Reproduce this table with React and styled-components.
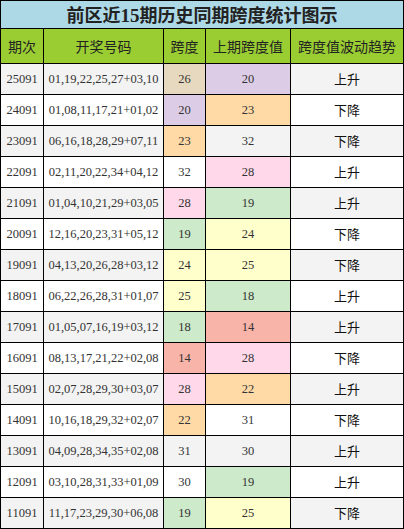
import React from 'react';
import styled, { createGlobalStyle } from 'styled-components';

const Global = createGlobalStyle`
    html, body{
        margin: 0;
        padding: 0;
        background: #FFF;
    }
`;

const colors = {
    tan: '#E7D9BF',
    lav: '#DDCCE6',
    peach: '#FFDAA7',
    pink: '#FFD9E9',
    green: '#CDEACA',
    yellow: '#FFFFCC',
    salmon: '#F9B4AA',
};

const rows = [
    ['25091', '01,19,22,25,27+03,10', '26', 'tan', '20', 'lav', '上升'],
    ['24091', '01,08,11,17,21+01,02', '20', 'lav', '23', 'peach', '下降'],
    ['23091', '06,16,18,28,29+07,11', '23', 'peach', '32', null, '下降'],
    ['22091', '02,11,20,22,34+04,12', '32', null, '28', 'pink', '上升'],
    ['21091', '01,04,10,21,29+03,05', '28', 'pink', '19', 'green', '上升'],
    ['20091', '12,16,20,23,31+05,12', '19', 'green', '24', 'yellow', '下降'],
    ['19091', '04,13,20,26,28+03,12', '24', 'yellow', '25', 'yellow', '下降'],
    ['18091', '06,22,26,28,31+01,07', '25', 'yellow', '18', 'green', '上升'],
    ['17091', '01,05,07,16,19+03,12', '18', 'green', '14', 'salmon', '上升'],
    ['16091', '08,13,17,21,22+02,08', '14', 'salmon', '28', 'pink', '下降'],
    ['15091', '02,07,28,29,30+03,07', '28', 'pink', '22', 'peach', '上升'],
    ['14091', '10,16,18,29,32+02,07', '22', 'peach', '31', null, '下降'],
    ['13091', '04,09,28,34,35+02,08', '31', null, '30', null, '上升'],
    ['12091', '03,10,28,31,33+01,09', '30', null, '19', 'green', '上升'],
    ['11091', '11,17,23,29,30+06,08', '19', 'green', '25', 'yellow', '下降'],
];

export default function App(){
    return (
        <>
            <Global />
            <Table>
                <colgroup>
                    <col style={{width: '43px'}} />
                    <col style={{width: '120px'}} />
                    <col style={{width: '42px'}} />
                    <col style={{width: '85px'}} />
                    <col />
                </colgroup>
                <tbody>
                    <tr>
                        <Title colSpan={5}>前区近<b className="num">15</b>期历史同期跨度统计图示</Title>
                    </tr>
                    <tr>
                        <Head>期次</Head>
                        <Head>开奖号码</Head>
                        <Head>跨度</Head>
                        <Head>上期跨度值</Head>
                        <Head>跨度值波动趋势</Head>
                    </tr>
                    {rows.map((r, i) =>
                        <Row key={r[0]} $odd={i % 2 === 0}>
                            <Num>{r[0]}</Num>
                            <Num>{r[1]}</Num>
                            <Num $bg={colors[r[3]]}>{r[2]}</Num>
                            <Num $bg={colors[r[5]]}>{r[4]}</Num>
                            <Trend>{r[6]}</Trend>
                        </Row>
                    )}
                </tbody>
            </Table>
        </>
    );
}

const Table = styled.table`
    width: 404px;
    border-collapse: collapse;
    table-layout: fixed;
    td, th{
        border: 1px solid #000;
        padding: 0;
        text-align: center;
        vertical-align: middle;
        line-height: 16px;
        box-sizing: border-box;
    }
`;

const Title = styled.th`
    height: 28px;
    background: #ADD8E6;
    color: #222;
    font-family: "Noto Sans CJK SC", sans-serif;
    font-size: 18px;
    font-weight: bold;
    .num{
        font-family: "Liberation Serif", serif;
        font-size: 19px;
    }
`;

const Head = styled.th`
    height: 35px;
    background: #9ACD32;
    color: #222;
    font-family: "Noto Sans CJK SC", sans-serif;
    font-size: 14px;
    font-weight: normal;
`;

const Row = styled.tr`
    background: ${p => p.$odd ? '#F3F3F3' : '#FFF'};
    td{
        height: 31px;
    }
`;

const Num = styled.td`
    background: ${p => p.$bg || 'transparent'};
    color: #333;
    font-family: "Liberation Serif", serif;
    font-size: 12.5px;
`;

const Trend = styled.td`
    color: #111;
    font-family: "Noto Sans CJK SC", sans-serif;
    font-size: 13px;
`;
